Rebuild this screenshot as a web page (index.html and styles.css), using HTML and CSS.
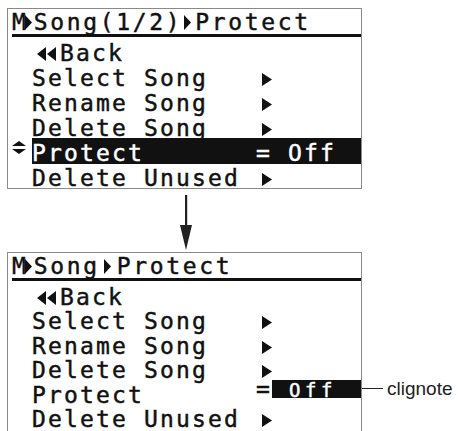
FILE: index.html
```html
<!DOCTYPE html>
<html>
<head>
<meta charset="utf-8">
<title>Protect</title>
<link rel="stylesheet" href="styles.css">
</head>
<body>
<div class="page">
  <div class="lcd lcd-top">
    <div class="hdr"><span class="m">M</span><svg class="tri-h" viewBox="0 0 7 15"><polygon points="0,0 7,7.5 0,15"/></svg><span class="ht">Song(1/2)</span><svg class="tri-h" viewBox="0 0 7 15"><polygon points="0,0 7,7.5 0,15"/></svg><span class="ht">Protect</span></div>
    <div class="rows">
      <div class="row"><div class="gut"></div><div class="main"><svg class="back" viewBox="0 0 28 14"><polygon points="5,7 14,0 14,14"/><polygon points="15,7 24,0 24,14"/></svg>Back</div></div>
      <div class="row"><div class="gut"></div><div class="main"><span class="lbl">Select Song</span><svg class="go" viewBox="0 0 16 13"><polygon points="6,0 16,6.5 6,13"/></svg></div></div>
      <div class="row"><div class="gut"></div><div class="main"><span class="lbl">Rename Song</span><svg class="go" viewBox="0 0 16 13"><polygon points="6,0 16,6.5 6,13"/></svg></div></div>
      <div class="row"><div class="gut"></div><div class="main"><span class="lbl">Delete Song</span><svg class="go" viewBox="0 0 16 13"><polygon points="6,0 16,6.5 6,13"/></svg></div></div>
      <div class="row"><div class="gut"><svg class="updown" viewBox="0 0 14 13"><polygon points="0,5 7,0 14,5"/><polygon points="0,8 14,8 7,13"/></svg></div><div class="main sel"><span class="lbl">Protect</span>= Off</div></div>
      <div class="row"><div class="gut"></div><div class="main"><span class="lbl">Delete Unused</span><svg class="go" viewBox="0 0 16 13"><polygon points="6,0 16,6.5 6,13"/></svg></div></div>
    </div>
  </div>

  <svg class="arrow" viewBox="0 0 14 63"><rect x="6" y="6" width="2.2" height="32"/><polygon points="1,36 13,36 7,61"/></svg>

  <div class="lcd lcd-bottom">
    <div class="hdr"><span class="m">M</span><svg class="tri-h" viewBox="0 0 7 15"><polygon points="0,0 7,7.5 0,15"/></svg><span class="ht">Song</span><svg class="tri-h wide" viewBox="0 0 7 15"><polygon points="0,0 7,7.5 0,15"/></svg><span class="ht">Protect</span></div>
    <div class="rows">
      <div class="row"><div class="gut"></div><div class="main"><svg class="back" viewBox="0 0 28 14"><polygon points="5,7 14,0 14,14"/><polygon points="15,7 24,0 24,14"/></svg>Back</div></div>
      <div class="row"><div class="gut"></div><div class="main"><span class="lbl">Select Song</span><svg class="go" viewBox="0 0 16 13"><polygon points="6,0 16,6.5 6,13"/></svg></div></div>
      <div class="row"><div class="gut"></div><div class="main"><span class="lbl">Rename Song</span><svg class="go" viewBox="0 0 16 13"><polygon points="6,0 16,6.5 6,13"/></svg></div></div>
      <div class="row"><div class="gut"></div><div class="main"><span class="lbl">Delete Song</span><svg class="go" viewBox="0 0 16 13"><polygon points="6,0 16,6.5 6,13"/></svg></div></div>
      <div class="row"><div class="gut"></div><div class="main edit"><span class="lbl">Protect</span><span class="eq">=</span><span class="blink"><span class="off">Off</span><span class="note"><span class="lead"></span>clignote</span></span></div></div>
      <div class="row"><div class="gut"></div><div class="main"><span class="lbl">Delete Unused</span><svg class="go" viewBox="0 0 16 13"><polygon points="6,0 16,6.5 6,13"/></svg></div></div>
    </div>
  </div>
</div>
</body>
</html>
```

FILE: styles.css
```css
html, body {
  margin: 0;
  padding: 0;
  background: #ffffff;
  overflow: hidden;
}

.page {
  width: 462px;
  height: 431px;
  padding-top: 8px;
  box-sizing: border-box;
  font-family: "DejaVu Sans Mono", "Liberation Mono", monospace;
  font-size: 23px;
  color: #111111;
  -webkit-text-stroke: 0.45px #111111;
}

.lcd {
  margin-left: 7px;
  width: 355px;
  box-sizing: border-box;
  border: 1px solid #8a8a8a;
}

.lcd-top {
  height: 181px;
}

.lcd-bottom {
  height: 179px;
  border-bottom: none;
}

.hdr {
  margin-left: 4px;
  padding-top: 1px;
  line-height: 24px;
  height: 24px;
  border-bottom: 3px solid #111111;
  white-space: nowrap;
}

.m {
  letter-spacing: 0;
}

.ht {
  letter-spacing: 2.65px;
}

.tri-h {
  width: 7px;
  height: 15px;
  margin-left: -1px;
  margin-right: 2px;
  vertical-align: baseline;
  fill: #111111;
}

.ht + .tri-h {
  margin-left: 2px;
  margin-right: 4px;
}

.ht + .tri-h.wide {
  margin-left: 4px;
  margin-right: 6px;
}

.rows {
  margin-top: 4px;
  letter-spacing: 2.15px;
  white-space: nowrap;
}

.row {
  display: flex;
  height: 25px;
  line-height: 25px;
}

.lcd-bottom .row {
  height: 24.4px;
  line-height: 24.4px;
}

.gut {
  width: 24px;
  flex: none;
}

.main {
  flex: 1;
}

.lbl {
  display: inline-block;
  width: 224px;
}

.back {
  width: 28px;
  height: 14px;
  vertical-align: baseline;
  fill: #111111;
}

.go {
  width: 16px;
  height: 13px;
  vertical-align: baseline;
  fill: #111111;
}

.updown {
  display: block;
  width: 14px;
  height: 13px;
  margin-left: 4px;
  fill: #111111;
}

.sel {
  background: #111111;
  color: #ffffff;
  -webkit-text-stroke: 0.45px #ffffff;
  margin-top: -3px;
  padding-top: 3px;
  height: 26px;
  box-sizing: border-box;
}

.edit {
  display: flex;
  align-items: flex-start;
}

.eq {
  width: 16px;
  flex: none;
  margin-top: -6px;
}

.blink {
  position: relative;
  flex: 1;
  margin-top: -2.6px;
  height: 18px;
  box-sizing: border-box;
  padding-top: 2px;
  padding-left: 17px;
  background: #111111;
  color: #ffffff;
  -webkit-text-stroke: 0.45px #ffffff;
  font-size: 19px;
  line-height: 16px;
  letter-spacing: 4.56px;
}

.note {
  position: absolute;
  left: calc(100% + 1px);
  top: 0;
  height: 18px;
  display: flex;
  align-items: center;
  font-family: "Liberation Sans", Arial, sans-serif;
  font-size: 19px;
  line-height: 18px;
  letter-spacing: 0;
  color: #222222;
  -webkit-text-stroke: 0;
}

.lead {
  display: block;
  width: 21px;
  height: 0;
  border-top: 1.5px solid #222222;
  margin-right: 4px;
}

.arrow {
  display: block;
  width: 14px;
  height: 63px;
  margin-left: 179px;
  fill: #222222;
}
```
